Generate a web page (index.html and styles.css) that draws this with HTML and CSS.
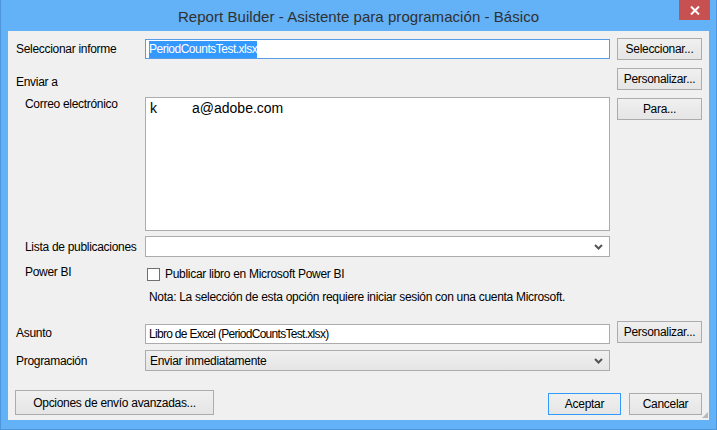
FILE: index.html
```html
<!DOCTYPE html>
<html lang="es">
<head>
<meta charset="utf-8">
<title>Report Builder</title>
<link rel="stylesheet" href="styles.css">
</head>
<body>
<div class="window">
  <div class="titlebar">
    <div class="title">Report Builder - Asistente para programación - Básico</div>
    <div class="close"><svg width="10" height="9" viewBox="0 0 10 9"><path d="M1 0.5 L9 8.5 M9 0.5 L1 8.5" stroke="#fff" stroke-width="2"/></svg></div>
  </div>
  <div class="panel">
    <div class="row r1">
      <div class="label">Seleccionar informe</div>
      <div class="field"><div class="input focus"><span class="sel">PeriodCountsTest.xlsx</span></div></div>
      <div class="btn">Seleccionar...</div>
    </div>
    <div class="row r2">
      <div class="label l-envia">Enviar a</div>
      <div class="field"></div>
      <div class="btn">Personalizar...</div>
    </div>
    <div class="row r3">
      <div class="label sub l-top">Correo electrónico</div>
      <div class="field"><div class="textarea"><span class="email">k         a@adobe.com</span></div></div>
      <div class="btn btn-top">Para...</div>
    </div>
    <div class="row r4">
      <div class="label sub">Lista de publicaciones</div>
      <div class="field"><div class="select white"><span></span><svg class="chev" width="9" height="6" viewBox="0 0 9 6"><path d="M1 1 L4.5 4.5 L8 1" stroke="#555" stroke-width="2" fill="none"/></svg></div></div>
      <div class="spacer"></div>
    </div>
    <div class="row r5">
      <div class="label sub l-top">Power BI</div>
      <div class="field check-field"><span class="checkbox"></span><span>Publicar libro en Microsoft Power BI</span></div>
      <div class="spacer"></div>
    </div>
    <div class="row r6">
      <div class="label"></div>
      <div class="field note">Nota: La selección de esta opción requiere iniciar sesión con una cuenta Microsoft.</div>
      <div class="spacer"></div>
    </div>
    <div class="row r7">
      <div class="label l-asunto">Asunto</div>
      <div class="field"><div class="input low">Libro de Excel (PeriodCountsTest.xlsx)</div></div>
      <div class="btn">Personalizar...</div>
    </div>
    <div class="row r8">
      <div class="label">Programación</div>
      <div class="field"><div class="select gray"><span>Enviar inmediatamente</span><svg class="chev" width="9" height="6" viewBox="0 0 9 6"><path d="M1 1 L4.5 4.5 L8 1" stroke="#555" stroke-width="2" fill="none"/></svg></div></div>
      <div class="spacer"></div>
    </div>
    <div class="footer">
      <div class="btn big">Opciones de envío avanzadas...</div>
      <div class="actions">
        <div class="btn act default">Aceptar</div>
        <div class="btn act">Cancelar</div>
      </div>
    </div>
    <div class="grip"></div>
  </div>
</div>
</body>
</html>
```
FILE: styles.css
```css
html, body {
  margin: 0;
  padding: 0;
}
body {
  width: 717px;
  height: 430px;
  overflow: hidden;
  font-family: "Liberation Sans", Arial, sans-serif;
  font-size: 12px;
  color: #000;
}
.window {
  width: 717px;
  height: 430px;
  box-sizing: border-box;
  background: #63b1f7;
  border-left: 1px solid #4d96dc;
  border-right: 1px solid #4d96dc;
  border-bottom: 1px solid #4d96dc;
  display: flex;
  flex-direction: column;
}
.titlebar {
  height: 31px;
  flex: none;
  display: flex;
  justify-content: center;
  position: relative;
}
.title {
  font-family: "Liberation Sans", Arial, sans-serif;
  font-size: 15px;
  color: #303030;
  padding-top: 8px;
  letter-spacing: 0.05px;
}
.close {
  position: absolute;
  right: 6px;
  top: 0;
  width: 31px;
  height: 20px;
  background: #c75050;
  display: flex;
  align-items: center;
  justify-content: center;
}
.close svg { display: block; }
.panel {
  margin: 0 7px 0 7px;
  height: 389px;
  background: #f0f0f0;
  position: relative;
  padding: 0 7px 0 8px;
  box-sizing: border-box;
  letter-spacing: -0.3px;
}
.row {
  display: flex;
  align-items: center;
}
.label {
  width: 129px;
  flex: none;
  white-space: nowrap;
}
.label.sub { padding-left: 9px; box-sizing: border-box; }
.field {
  width: 465px;
  flex: none;
}
.spacer, .btn { width: 85px; flex: none; }
.row .btn, .row .spacer { margin-left: 7px; }
.btn {
  box-sizing: border-box;
  height: 22px;
  border: 1px solid #acacac;
  background: linear-gradient(#f0f0f0, #e5e5e5);
  display: flex;
  align-items: center;
  justify-content: center;
  white-space: nowrap;
}
.r1 { margin-top: 7px; height: 22px; }
.r2 { margin-top: 8px; height: 22px; }
.l-envia { padding-top: 6px; }
.r3 { margin-top: 7px; height: 134px; align-items: flex-start; }
.l-top { line-height: 14px; }
.btn-top { margin-top: 1px; }
.r4 { margin-top: 5px; height: 21px; }
.r5 { margin-top: 8px; height: 16px; align-items: flex-start; }
.r6 { margin-top: 8px; height: 15px; }
.r7 { margin-top: 17px; height: 23px; align-items: flex-start; }
.l-asunto { padding-top: 5px; }
.r8 { margin-top: 6px; height: 21px; }

.input {
  box-sizing: border-box;
  height: 20px;
  border: 1px solid #acacac;
  background: #fff;
  padding: 0 3px;
  display: flex;
  align-items: center;
  white-space: nowrap;
  letter-spacing: -0.7px;
}
.input.focus { border-color: #569de5; letter-spacing: -0.5px; }
.input.low { margin-top: 3px; }
.sel {
  background: #3399ff;
  color: #fff;
  padding: 1px 0 2px;
}
.textarea {
  box-sizing: border-box;
  height: 134px;
  border: 1px solid #acacac;
  background: #fff;
  padding: 1px 4px;
}
.email {
  font-size: 14px;
  white-space: pre;
  line-height: 18px;
  letter-spacing: 0;
}
.select {
  box-sizing: border-box;
  height: 21px;
  border: 1px solid #acacac;
  display: flex;
  align-items: center;
  justify-content: space-between;
  padding: 0 6px 0 4px;
}
.select.white { background: #fff; }
.select.gray { background: linear-gradient(#f0f0f0, #e5e5e5); }
.chev { display: block; }
.check-field {
  display: flex;
  align-items: center;
  gap: 5px;
  padding-left: 2px;
  box-sizing: border-box;
  margin-top: 2px;
}
.checkbox {
  width: 13px;
  height: 13px;
  box-sizing: border-box;
  border: 1px solid #707070;
  background: #fff;
  flex: none;
}
.note {
  padding-left: 4px;
  box-sizing: border-box;
  white-space: nowrap;
}
.footer {
  display: flex;
  justify-content: space-between;
  align-items: flex-end;
  margin-top: 19px;
  margin-left: -1px;
}
.btn.big {
  width: 199px;
  height: 25px;
}
.actions {
  display: flex;
  gap: 8px;
}
.btn.act {
  width: 73px;
  height: 22px;
}
.btn.default { border-color: #3399ff; }
.grip {
  position: absolute;
  right: 1px;
  bottom: 2px;
  width: 6px;
  height: 6px;
  background:
    radial-gradient(circle, #b8b8b8 0.8px, transparent 1px) 0 0 / 2px 2px;
  clip-path: polygon(100% 0, 100% 100%, 0 100%);
}
```
